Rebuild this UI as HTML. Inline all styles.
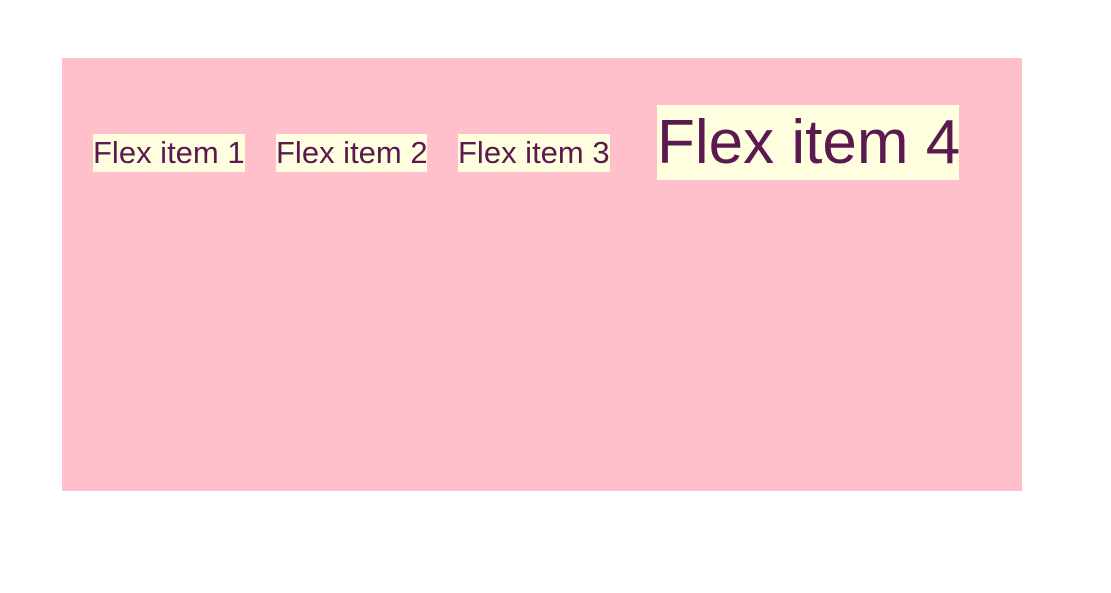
<!DOCTYPE html>
<html><head><style>
html,body{margin:0;padding:0;background:#fff;width:1111px;height:593px;overflow:hidden}
.box{position:absolute;left:62px;top:58px;width:960px;height:433px;background:#ffc0cb;display:flex;align-items:baseline;padding-top:47px;box-sizing:border-box}
.it{background:#ffffe0;color:#5a1a50;font-family:"Liberation Sans",sans-serif;font-size:31px;line-height:38px;white-space:nowrap;margin-left:31px;overflow:hidden}
.it4{font-size:62px;line-height:75px;margin-left:47px}
</style></head><body>
<div class="box">
<div class="it" style="width:152px">Flex item 1</div>
<div class="it" style="width:151px">Flex item 2</div>
<div class="it" style="width:152px;margin-left:31px">Flex item 3</div>
<div class="it it4" style="width:302px">Flex item 4</div>
</div>
</body></html>
